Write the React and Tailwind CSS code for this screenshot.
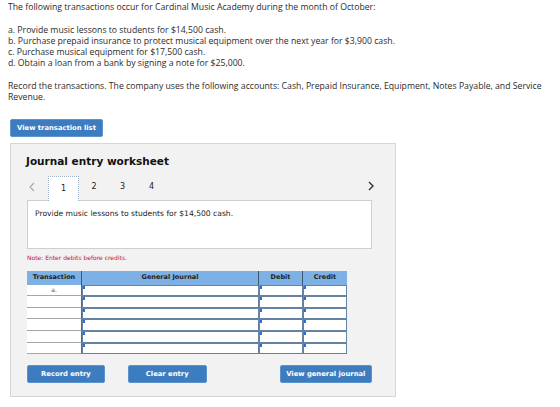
import React from "react";

const topFont = { fontFamily: "'Open Sans', 'Liberation Sans', sans-serif" };

function Btn({ children, className = "" }) {
  return (
    <div
      className={
        "flex items-center justify-center bg-[#3d7dbf] text-white font-bold text-[6.8px] rounded-[2px] border border-[#5b93cc] " +
        className
      }
      style={{ fontFamily: "'DejaVu Sans', Verdana, sans-serif" }}
    >
      {children}
    </div>
  );
}

function InputCell({ className = "" }) {
  return (
    <div className={"relative h-full bg-white border-[1.5px] border-[#6483a3] " + className}>
      <div className="absolute left-0 top-0 w-[2px] h-[3px] bg-[#2e6fd6]" />
    </div>
  );
}

export default function App() {
  const rows = ["a.", "", "", "", "", ""];
  return (
    <div className="w-[560px] h-[407px] bg-white text-[#2b2b2b]">
      <div className="pl-2 pt-[2px] w-[558px] text-[8.7px] leading-[11.3px]" style={topFont}>
        <p>The following transactions occur for Cardinal Music Academy during the month of October:</p>
        <div className="h-[11.3px]" />
        <p>a. Provide music lessons to students for $14,500 cash.</p>
        <p>b. Purchase prepaid insurance to protect musical equipment over the next year for $3,900 cash.</p>
        <p>c. Purchase musical equipment for $17,500 cash.</p>
        <p>d. Obtain a loan from a bank by signing a note for $25,000.</p>
        <div className="h-[11.3px]" />
        <p>Record the transactions. The company uses the following accounts: Cash, Prepaid Insurance, Equipment, Notes Payable, and Service</p>
        <p>Revenue.</p>
      </div>

      <div className="pl-[10px] mt-[15px]">
        <Btn className="w-[93px] h-[18px]">View transaction list</Btn>
      </div>

      <div
        className="ml-[10px] mt-[6px] w-[386px] h-[254px] bg-[#f2f2f2] border border-[#d6d6d6] pl-[16px] pr-[23px]"
        style={{ fontFamily: "'DejaVu Sans', Verdana, sans-serif" }}
      >
        <div className="pt-[10px] -ml-[1px] text-[10.5px] font-bold text-[#111] leading-[14px]">
          Journal entry worksheet
        </div>

        <div className="mt-[7px] flex items-end h-[25px] relative">
          <div className="w-[21px] h-full flex items-center pl-[2px] text-[#aaa]">
            <svg width="6" height="10" viewBox="0 0 6 10">
              <path d="M5 1 L1 5 L5 9" fill="none" stroke="#aaa" strokeWidth="1.2" />
            </svg>
          </div>
          <div className="w-[31px] h-[25px] bg-white border border-dotted border-b-0 border-[#9fb0c8] flex items-center justify-center text-[8px] text-[#222] relative z-10 -mb-[1px]">
            1
          </div>
          <div className="w-[29px] h-full flex items-center justify-center text-[8px] text-[#222] pl-[1px]">2</div>
          <div className="w-[29px] h-full flex items-center justify-center text-[8px] text-[#222]">3</div>
          <div className="w-[29px] h-full flex items-center justify-center text-[8px] text-[#222]">4</div>
          <div className="flex-1" />
          <div className="h-full flex items-center pr-[0px] -mr-[2px] pb-[3px]">
            <svg width="6" height="10" viewBox="0 0 6 10">
              <path d="M1 1 L5 5 L1 9" fill="none" stroke="#333" strokeWidth="1.4" />
            </svg>
          </div>
        </div>

        <div className="w-[345px] h-[49px] bg-white border border-[#cfcfcf] pl-[7px] pt-[8px] text-[7.6px] leading-[9px] text-[#222]">
          Provide music lessons to students for $14,500 cash.
        </div>

        <div className="mt-[5px] text-[6px] text-[#c8102e] leading-[8px]">Note: Enter debits before credits.</div>

        <div className="mt-[9px] w-[320px]">
          <div className="grid grid-cols-[55px_177px_44px_44px] h-[14px] bg-[#7db0e4] text-[6.5px] font-bold text-[#222]">
            <div className="flex items-center justify-center border-r-[1.5px] border-[#3b5670]">Transaction</div>
            <div className="flex items-center justify-center border-r-[1.5px] border-[#3b5670]">General Journal</div>
            <div className="flex items-center justify-center border-r-[1.5px] border-[#3b5670]">Debit</div>
            <div className="flex items-center justify-center">Credit</div>
          </div>
          {rows.map((r, i) => (
            <div key={i} className="grid grid-cols-[55px_177px_44px_44px] h-[11.6px]">
              <div className="bg-white border-b border-[#a5a5a5] border-r-[1.5px] border-r-[#4e6a86] flex items-center justify-center text-[6px] text-[#444]">
                {r}
              </div>
              <InputCell />
              <InputCell />
              <InputCell />
            </div>
          ))}
        </div>

        <div className="mt-[11px] flex items-center">
          <Btn className="w-[80px] h-[18px]">Record entry</Btn>
          <Btn className="ml-[23px] w-[81px] h-[18px]">Clear entry</Btn>
          <Btn className="ml-[73px] w-[95px] h-[18px]">View general journal</Btn>
        </div>
      </div>
    </div>
  );
}
